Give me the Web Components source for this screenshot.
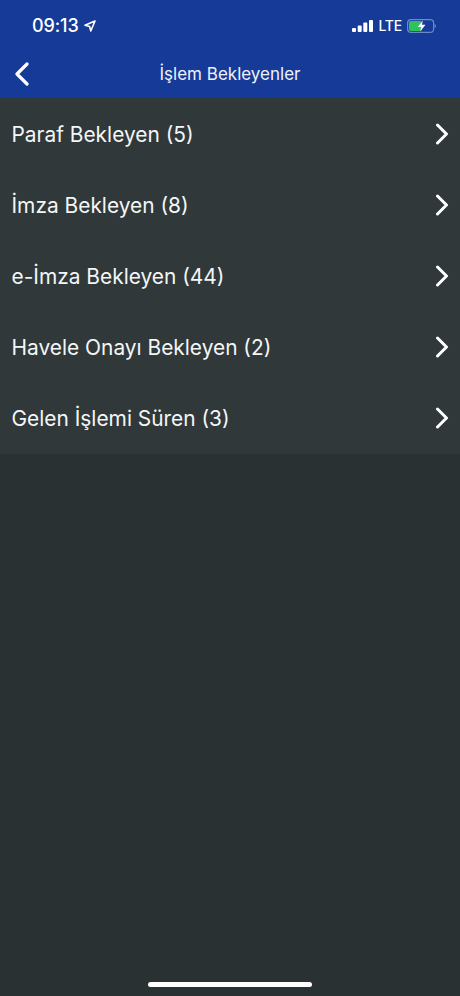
<!DOCTYPE html>
<html lang="tr"><head><meta charset="utf-8"><title>İşlem Bekleyenler</title>
<style>
html,body{margin:0;padding:0;height:100%;background:#2a3132}
body{font-family:Inter,"Liberation Sans",sans-serif;color:#fff}
</style></head><body>
<app-screen>
  <status-bar slot="top"></status-bar>
  <nav-bar slot="top" title-text="İşlem Bekleyenler"></nav-bar>
  <list-row>Paraf Bekleyen (5)</list-row>
  <list-row>İmza Bekleyen (8)</list-row>
  <list-row>e-İmza Bekleyen (44)</list-row>
  <list-row>Havele Onayı Bekleyen (2)</list-row>
  <list-row>Gelen İşlemi Süren (3)</list-row>
</app-screen>
<script>
function def(name,html,init){
  customElements.define(name,class extends HTMLElement{
    connectedCallback(){
      if(this.shadowRoot)return;
      this.attachShadow({mode:'open'}).innerHTML=html;
      if(init)init(this);
    }
  });
}
def('app-screen',`<style>
:host{display:flex;flex-direction:column;height:996px;width:460px;background:#2a3132;overflow:hidden;position:relative}
.top{display:block;background:#163a97}
.list{display:flex;flex-direction:column;background:#30383a;height:356px}
.spacer{flex:1}
.home{position:absolute;left:148px;bottom:9px;width:164px;height:5px;border-radius:3px;background:#fff}
</style><div class="top"><slot name="top"></slot></div><div class="list"><slot></slot></div><div class="spacer"></div><div class="home"></div>`);
def('status-bar',`<style>
:host{display:flex;align-items:center;height:52px;padding:0 24px 0 32px;box-sizing:border-box;color:#fff}
.t{font:500 18px/20px Inter,sans-serif;letter-spacing:-.1px;margin-right:5px}
.sp{flex:1}
.lte{font:500 14px/20px Inter,sans-serif;margin:0 5px 0 5px;letter-spacing:-.2px}
svg{display:block}
</style>
<span class="t">09:13</span>
<svg width="12" height="12" viewBox="0 0 12 12"><path d="M11 1 1 5.200l4.600 1.200L6.800 11z" fill="none" stroke="#fff" stroke-width="1.600" stroke-linejoin="round"/></svg>
<span class="sp"></span>
<svg width="21" height="12" viewBox="0 0 21 12"><g fill="#fff"><rect x="0" y="8" width="4" height="4" rx="1"/><rect x="5.700" y="5.500" width="4" height="6.500" rx="1"/><rect x="11.300" y="2.500" width="4" height="9.500" rx="1"/><rect x="17" y="0" width="4" height="12" rx="1"/></g></svg>
<span class="lte">LTE</span>
<svg width="29" height="14" viewBox="0 0 29 14"><rect x=".6" y=".6" width="26" height="12.800" rx="3.500" fill="none" stroke="#6d8ac8" stroke-width="1.200"/><rect x="2" y="2" width="13" height="10" rx="2" fill="#2fc25a"/><path d="M27.600 5v4c.8-.3 1.300-1.100 1.300-2s-.5-1.700-1.300-2z" fill="#6d8ac8"/><path d="M15.800 1.500 10.800 8h3.400l-1 4.500 5.300-6.800h-3.500z" fill="#fff"/></svg>`);
def('nav-bar',`<style>
:host{display:grid;grid-template-columns:60px 1fr 60px;align-items:center;height:46px;color:#fff}
.b{display:flex;padding-left:14px;margin-top:-3px}
.ti{text-align:center;font:400 17px/22px Inter,sans-serif;color:#eef2fb;margin-top:-2px}
svg{display:block}
</style>
<div class="b"><svg width="16" height="24" viewBox="0 0 16 24"><path d="M13 2 3 12l10 10" fill="none" stroke="#fff" stroke-width="3.200" stroke-linecap="round" stroke-linejoin="round"/></svg></div>
<div class="ti" id="t"></div><div></div>`,el=>{el.shadowRoot.getElementById('t').textContent=el.getAttribute('title-text')});
def('list-row',`<style>
:host{display:flex;align-items:center;flex:1;padding:0 11px 0 11.500px;color:#fff}
.l{flex:1;font:400 20.900px/24px Inter,sans-serif;color:#f4f6f6;padding-top:2px}
svg{display:block}
</style>
<span class="l"><slot></slot></span>
<svg width="14" height="22" viewBox="0 0 14 22"><path d="M2.500 2 11.500 11l-9 9" fill="none" stroke="#fff" stroke-width="3" stroke-linecap="round" stroke-linejoin="round"/></svg>`);
</script>
</body></html>
